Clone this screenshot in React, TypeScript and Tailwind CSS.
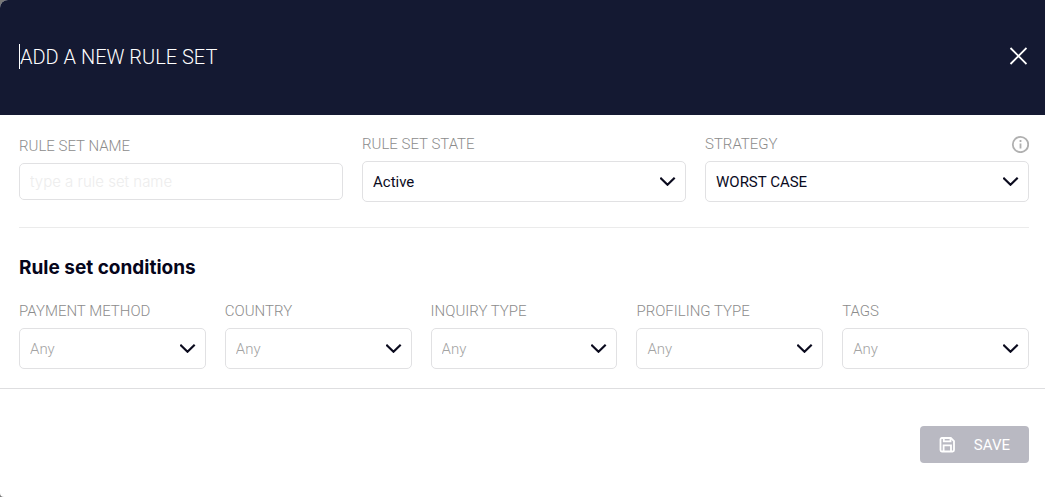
import { useId, useState } from "react";
import type { ReactNode } from "react";

const conditions = [
  { label: "PAYMENT METHOD", options: ["Card", "Bank transfer", "Wallet"] },
  { label: "COUNTRY", options: ["Germany", "France", "Spain"] },
  { label: "INQUIRY TYPE", options: ["Full", "Partial"] },
  { label: "PROFILING TYPE", options: ["Basic", "Extended"] },
  { label: "TAGS", options: ["New", "Trusted"] },
];

interface SelectFieldProps {
  label: string;
  options: string[];
  placeholder?: string;
  info?: ReactNode;
}

function SelectField({ label, options, placeholder, info }: SelectFieldProps) {
  const id = useId();
  const [value, setValue] = useState(placeholder ? "" : options[0]);

  return (
    <div className="min-w-0">
      <div className="mb-[7px] flex h-5 items-center justify-between">
        <label htmlFor={id} className="text-[15px] leading-5 text-[#8c8c8c]">
          {label}
        </label>
        {info}
      </div>
      <div className="relative">
        <select
          id={id}
          value={value}
          onChange={(e) => setValue(e.target.value)}
          className={`h-[41px] w-full appearance-none rounded-[5px] border border-[#e1e1e3] bg-white pt-0.5 pr-9 pl-2.5 text-[15px] ${
            value ? "font-normal text-[#0b0b1e]" : "text-[#a3a3a3]"
          }`}
        >
          {placeholder && <option value="">{placeholder}</option>}
          {options.map((option) => (
            <option key={option}>{option}</option>
          ))}
        </select>
        <svg
          className="pointer-events-none absolute top-[15px] right-2.5 h-2.5 w-4"
          viewBox="0 0 16 10"
          fill="none"
          stroke="#0b0b1e"
          strokeWidth="2.2"
        >
          <path d="M.3 1.700 7.500 8.700l7.200-7" />
        </svg>
      </div>
    </div>
  );
}

function InfoButton() {
  return (
    <button type="button" aria-label="About strategy" className="text-[#b0b0b0]">
      <svg className="block h-[18px] w-[18px]" viewBox="0 0 18 18" fill="none" stroke="currentColor">
        <circle cx="9.500" cy="9.500" r="7.700" strokeWidth="1.800" />
        <path d="M9.500 8.500v5M9.500 5v1.900" strokeWidth="1.800" />
      </svg>
    </button>
  );
}

function SaveIcon() {
  return (
    <svg className="h-4 w-4" viewBox="0 0 16 16" fill="none" stroke="currentColor" strokeWidth="1.8">
      <path d="M2.9 1h8.900L15 4.200v8.900c0 .8-.6 1.400-1.400 1.400H2.900c-.8 0-1.400-.6-1.400-1.400V2.400C1.500 1.600 2.100 1 2.900 1Z" />
      <path d="M4.800 1v3.400h6.700V1" />
      <path d="M4.600 14.500V8.300h7.400v6.200" />
    </svg>
  );
}

export default function App() {
  const [name, setName] = useState("");

  return (
    <div className="bg-[#777777] font-['Roboto',sans-serif] font-light">
      <form
        className="overflow-hidden rounded-tl-lg rounded-bl bg-white"
        onSubmit={(e) => e.preventDefault()}
      >
        <header className="flex h-[115px] items-center justify-between bg-[#141932] pr-4 pb-[3px] pl-[19px] text-white">
          <h1 className="border-l border-white pt-px text-xl leading-6">ADD A NEW RULE SET</h1>
          <button type="button" aria-label="Close" className="p-0.5">
            <svg className="block h-[18px] w-[18px]" viewBox="0 0 18 18" stroke="currentColor" strokeWidth="1.8">
              <path d="m1.500 1 16 16M17.500 1l-16 16" />
            </svg>
          </button>
        </header>

        <div className="border-b border-[#dedee0] pt-[19px] pr-4 pb-[19px] pl-[19px]">
          <section className="grid grid-cols-3 items-center gap-[19px] border-b border-[#ebebeb] pb-[25px]">
            <div className="min-w-0">
              <label
                htmlFor="rule-set-name"
                className="mb-[7px] block text-[15px] leading-5 text-[#8c8c8c]"
              >
                RULE SET NAME
              </label>
              <input
                id="rule-set-name"
                type="text"
                value={name}
                onChange={(e) => setName(e.target.value)}
                placeholder="type a rule set name"
                className="block h-[37px] w-full rounded-[5px] border border-[#e1e1e3] px-2.5 font-['Inter',sans-serif] text-[15px] text-[#0b0b1e] placeholder:text-[#ededed]"
              />
            </div>
            <SelectField label="RULE SET STATE" options={["Active", "Inactive"]} />
            <SelectField
              label="STRATEGY"
              options={["WORST CASE", "BEST CASE"]}
              info={<InfoButton />}
            />
          </section>

          <h2 className="mt-7 mb-[21px] font-['Inter',sans-serif] text-[19px] leading-6 font-bold text-[#05051a]">
            Rule set conditions
          </h2>
          <section className="grid grid-cols-5 gap-[19px]">
            {conditions.map((item) => (
              <SelectField
                key={item.label}
                label={item.label}
                options={item.options}
                placeholder="Any"
              />
            ))}
          </section>
        </div>

        <footer className="flex justify-end pt-[37px] pr-4 pb-[34px]">
          <button
            type="submit"
            className="flex h-[37px] items-center gap-[19px] rounded bg-[#b9b9c2] px-[19px] pt-px text-[15px] font-normal text-white"
          >
            <SaveIcon />
            SAVE
          </button>
        </footer>
      </form>
    </div>
  );
}
